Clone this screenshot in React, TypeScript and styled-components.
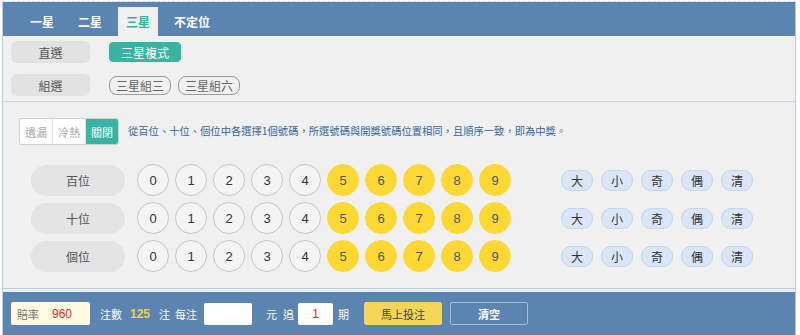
import React, { useState } from 'react'
import styled, { createGlobalStyle } from 'styled-components'

const GlobalStyle = createGlobalStyle`
  body {
    margin: 0;
    background: #ffffff;
    font-family: 'Liberation Sans', 'Noto Sans CJK TC', sans-serif;
  }
`

const CJK = `'Noto Sans CJK TC', 'Liberation Sans', sans-serif`

const Frame = styled.div`
  margin: 1px 0 0 2px;
  width: 792px;
  border-left: 1px solid #b9cde5;
  border-right: 1px solid #b9cde5;
  border-top: 1px dashed #d0dcea;
  background: #eef2f7;
`

const TabBar = styled.div`
  height: 34px;
  background: #5b84b1;
  display: flex;
  align-items: flex-end;
  gap: 8px;
  padding-left: 19px;
`

const Tab = styled.div<{ $active?: boolean }>`
  height: 29px;
  padding: 0 8px;
  display: flex;
  align-items: center;
  font-family: ${CJK};
  font-size: 12px;
  font-weight: 700;
  color: ${({ $active }) => ($active ? '#3bb0a0' : '#ffffff')};
  background: ${({ $active }) => ($active ? '#f0f0f0' : 'transparent')};
  cursor: pointer;
`

const TypePanel = styled.div`
  background: #f0f0f0;
  padding: 5px 8px 5px;
  display: flex;
  flex-direction: column;
  gap: 11px;
  border-bottom: 1px solid #d6d6d6;
`

const TypeRow = styled.div`
  display: flex;
  align-items: center;
`

const TypeLabel = styled.div`
  width: 79px;
  height: 22px;
  border-radius: 6px;
  background: #e2e2e2;
  color: #555;
  font-family: ${CJK};
  font-size: 12px;
  display: flex;
  align-items: center;
  justify-content: center;
  margin-right: 19px;
`

const Options = styled.div`
  display: flex;
  gap: 7px;
`

const OptionButton = styled.div<{ $active?: boolean }>`
  box-sizing: border-box;
  height: ${({ $active }) => ($active ? '20px' : '19px')};
  width: ${({ $active }) => ($active ? '72px' : '62px')};
  border-radius: ${({ $active }) => ($active ? '4px' : '8px')};
  border: 1px solid ${({ $active }) => ($active ? '#3bb3a3' : '#9a9a9a')};
  background: ${({ $active }) => ($active ? '#3bb3a3' : 'transparent')};
  color: ${({ $active }) => ($active ? '#ffffff' : '#666')};
  font-family: ${CJK};
  font-size: 12px;
  display: flex;
  align-items: center;
  justify-content: center;
  cursor: pointer;
`

const PickPanel = styled.div`
  background: #f0f0f0;
  padding: 16px 0 16px 16px;
  border-bottom: 1px solid #b9cde5;
`

const TipRow = styled.div`
  display: flex;
  align-items: flex-start;
  gap: 9px;
`

const Segmented = styled.div`
  display: flex;
  border: 1px solid #d0d0d0;
  border-radius: 3px;
  background: #ffffff;
  overflow: hidden;
`

const Segment = styled.div<{ $active?: boolean }>`
  width: 32px;
  height: 25px;
  display: flex;
  align-items: center;
  justify-content: center;
  font-family: ${CJK};
  font-size: 11px;
  color: ${({ $active }) => ($active ? '#ffffff' : '#aaaaaa')};
  background: ${({ $active }) => ($active ? '#3bb3a3' : 'transparent')};
  & + & {
    border-left: 1px solid #e0e0e0;
  }
`

const Tip = styled.div`
  margin-top: 5px;
  font-family: ${CJK};
  font-size: 10.3px;
  color: #35679a;
`

const Rows = styled.div`
  margin-top: 19px;
  padding-left: 12px;
  display: flex;
  flex-direction: column;
  gap: 6px;
`

const BallRow = styled.div`
  display: flex;
  align-items: center;
`

const PlaceLabel = styled.div`
  width: 94px;
  height: 31px;
  border-radius: 16px;
  background: #e4e4e4;
  color: #555;
  font-family: ${CJK};
  font-size: 12px;
  display: flex;
  align-items: center;
  justify-content: center;
  margin-right: 12px;
`

const Balls = styled.div`
  display: flex;
  gap: 6px;
`

const Ball = styled.div<{ $hot?: boolean }>`
  box-sizing: border-box;
  width: 32px;
  height: 32px;
  border-radius: 50%;
  border: 1px solid ${({ $hot }) => ($hot ? '#fdd835' : '#c6c6c6')};
  background: ${({ $hot }) => ($hot ? '#fdd835' : '#f4f4f4')};
  color: ${({ $hot }) => ($hot ? '#555' : '#333')};
  font-size: 13px;
  display: flex;
  align-items: center;
  justify-content: center;
  cursor: pointer;
`

const Quick = styled.div`
  display: flex;
  gap: 8px;
  margin-left: 50px;
`

const QuickButton = styled.div`
  box-sizing: border-box;
  width: 32px;
  height: 21px;
  border-radius: 10px;
  background: #dae6f7;
  border: 1px solid #c3d6ef;
  color: #333;
  font-family: ${CJK};
  font-size: 12px;
  display: flex;
  align-items: center;
  justify-content: center;
  cursor: pointer;
`

const Footer = styled.div`
  margin-top: 3px;
  height: 46px;
  background: #5b84b1;
  display: flex;
  align-items: center;
  padding: 0 0 3px 8px;
  box-sizing: border-box;
  font-family: ${CJK};
  font-size: 11px;
  color: #ffffff;
`

const OddsBox = styled.div`
  width: 79px;
  height: 23px;
  box-sizing: border-box;
  padding-left: 6px;
  border-radius: 2px;
  background: #fffbe3;
  display: flex;
  align-items: center;
  color: #777;
`

const Odds = styled.span`
  margin-left: 13px;
  color: #e02828;
  font-family: 'Liberation Sans', sans-serif;
  font-size: 12px;
`

const FooterText = styled.span<{ $gap: number; $color?: string }>`
  margin-left: ${({ $gap }) => $gap}px;
  color: ${({ $color }) => $color || '#ffffff'};
`

const Count = styled(FooterText)`
  font-family: 'Liberation Sans', sans-serif;
  font-size: 12px;
  font-weight: 700;
`

const Field = styled.input<{ $gap: number; $width: number }>`
  box-sizing: border-box;
  margin-left: ${({ $gap }) => $gap}px;
  width: ${({ $width }) => $width}px;
  height: 22px;
  border: none;
  border-radius: 2px;
  background: #ffffff;
  color: #e02828;
  text-align: center;
  font-family: 'Liberation Sans', sans-serif;
  font-size: 12px;
  outline: none;
`

const ActionButton = styled.div<{ $gap: number; $primary?: boolean }>`
  box-sizing: border-box;
  margin-left: ${({ $gap }) => $gap}px;
  width: 78px;
  height: 23px;
  border-radius: 2px;
  border: 1px solid ${({ $primary }) => ($primary ? '#f5d45a' : '#a3bddb')};
  background: ${({ $primary }) => ($primary ? '#f5d45a' : 'transparent')};
  color: ${({ $primary }) => ($primary ? '#444' : '#ffffff')};
  font-weight: ${({ $primary }) => ($primary ? 400 : 700)};
  display: flex;
  align-items: center;
  justify-content: center;
  cursor: pointer;
`

const tabs = ['一星', '二星', '三星', '不定位']
const places = ['百位', '十位', '個位']
const quick = ['大', '小', '奇', '偶', '清']
const digits = [0, 1, 2, 3, 4, 5, 6, 7, 8, 9]

const App: React.FC = () => {
  const [tab, setTab] = useState(2)
  const [mode, setMode] = useState(2)

  return (
    <>
      <GlobalStyle />
      <Frame>
        <TabBar>
          {tabs.map((t, i) => (
            <Tab key={t} $active={i === tab} onClick={() => setTab(i)}>
              {t}
            </Tab>
          ))}
        </TabBar>
        <TypePanel>
          <TypeRow>
            <TypeLabel>直選</TypeLabel>
            <Options>
              <OptionButton $active>三星複式</OptionButton>
            </Options>
          </TypeRow>
          <TypeRow>
            <TypeLabel>組選</TypeLabel>
            <Options>
              <OptionButton>三星組三</OptionButton>
              <OptionButton>三星組六</OptionButton>
            </Options>
          </TypeRow>
        </TypePanel>
        <PickPanel>
          <TipRow>
            <Segmented>
              {['遺漏', '冷熱', '關閉'].map((s, i) => (
                <Segment key={s} $active={i === mode} onClick={() => setMode(i)}>
                  {s}
                </Segment>
              ))}
            </Segmented>
            <Tip>從百位、十位、個位中各選擇1個號碼，所選號碼與開獎號碼位置相同，且順序一致，即為中獎。</Tip>
          </TipRow>
          <Rows>
            {places.map((p) => (
              <BallRow key={p}>
                <PlaceLabel>{p}</PlaceLabel>
                <Balls>
                  {digits.map((d) => (
                    <Ball key={d} $hot={d >= 5}>
                      {d}
                    </Ball>
                  ))}
                </Balls>
                <Quick>
                  {quick.map((q) => (
                    <QuickButton key={q}>{q}</QuickButton>
                  ))}
                </Quick>
              </BallRow>
            ))}
          </Rows>
        </PickPanel>
        <Footer>
          <OddsBox>
            賠率<Odds>960</Odds>
          </OddsBox>
          <FooterText $gap={10}>注數</FooterText>
          <Count $gap={8} $color="#e8d444">125</Count>
          <FooterText $gap={9}>注</FooterText>
          <FooterText $gap={5}>每注</FooterText>
          <Field $gap={7} $width={48} defaultValue="" />
          <FooterText $gap={14}>元</FooterText>
          <FooterText $gap={6}>追</FooterText>
          <Field $gap={4} $width={35} defaultValue="1" />
          <FooterText $gap={5}>期</FooterText>
          <ActionButton $gap={15} $primary>馬上投注</ActionButton>
          <ActionButton $gap={8}>清空</ActionButton>
        </Footer>
      </Frame>
    </>
  )
}

export default App
